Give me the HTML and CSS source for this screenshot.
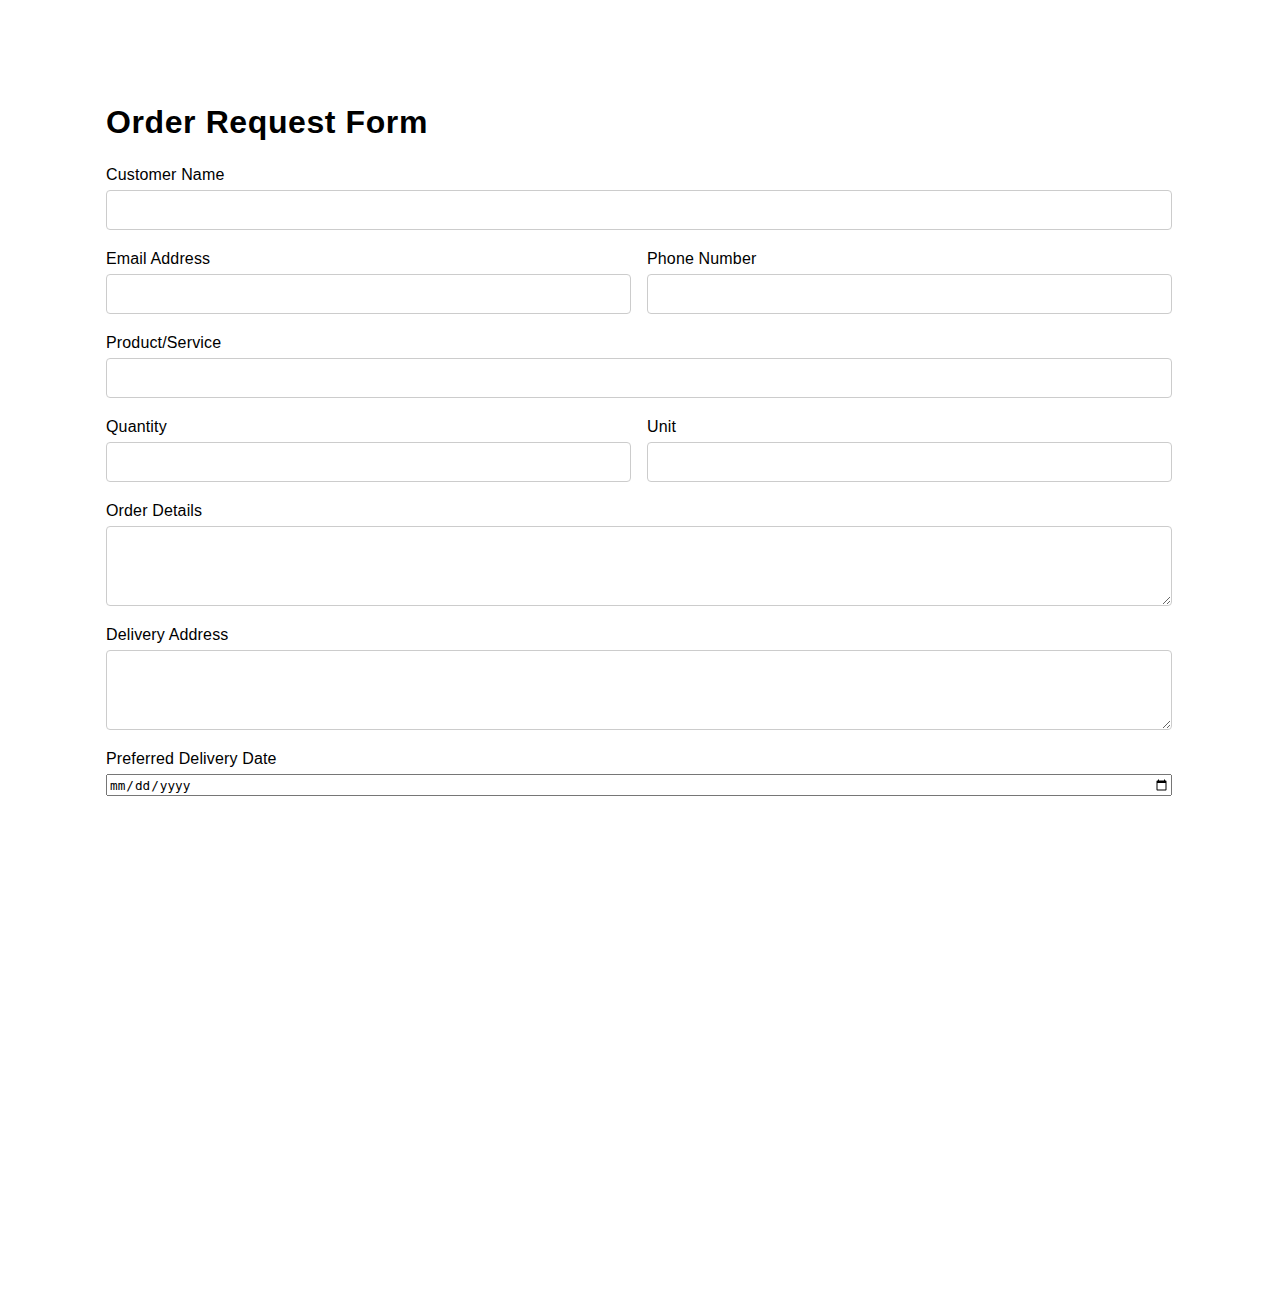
FILE: index.html
```html
<!DOCTYPE html>
<html lang="en">
<head>
    <meta charset="UTF-8">
    <meta name="viewport" content="width=device-width, initial-scale=1.0">
    <title>Order Request Form</title>
    <link rel="stylesheet" href="styles.css">
</head>
<body>
    <div class="container">
        <h1>Order Request Form</h1>
        <form>
            <div class="field">
                <label for="name">Customer Name</label>
                <input type="text" id="name" class="box">
            </div>

            <div class="row">
                <div class="field">
                    <label for="email">Email Address</label>
                    <input type="email" id="email" class="box">
                </div>
                <div class="field">
                    <label for="phone">Phone Number</label>
                    <input type="tel" id="phone" class="box">
                </div>
            </div>

            <div class="field">
                <label for="product">Product/Service</label>
                <input type="text" id="product" class="box">
            </div>

            <div class="row">
                <div class="field">
                    <label for="qty">Quantity</label>
                    <input type="number" id="qty" class="box">
                </div>
                <div class="field">
                    <label for="unit">Unit</label>
                    <input type="text" id="unit" class="box">
                </div>
            </div>

            <div class="field">
                <label for="details">Order Details</label>
                <textarea id="details" class="box area"></textarea>
            </div>

            <div class="field">
                <label for="address">Delivery Address</label>
                <textarea id="address" class="box area"></textarea>
            </div>

            <div class="field">
                <label for="date">Preferred Delivery Date</label>
                <input type="date" id="date" class="date">
            </div>
        </form>
    </div>
</body>
</html>
```

FILE: styles.css
```css
body {
    margin: 0;
    font-family: "Liberation Sans", Arial, sans-serif;
    color: #000;
    background: #fff;
}
.container { width: 1066px; margin: 0 auto; padding: 104px 0 40px; }
h1 { font-size: 32px; margin: 0 0 25px; line-height: 37px; letter-spacing: 0.6px; }
.field { margin-bottom: 20px; }
.field label { display: block; font-size: 16px; line-height: 18px; margin-bottom: 6px; letter-spacing: 0.15px; }
.row { display: grid; grid-template-columns: 1fr 1fr; gap: 16px; }
.box {
    display: block;
    width: 100%;
    height: 40px;
    box-sizing: border-box;
    border: 1px solid #ccc;
    border-radius: 4px;
    padding: 8px;
    font-family: inherit;
    font-size: 16px;
}
.area { height: 80px; resize: vertical; }
.date {
    display: block;
    width: 100%;
    height: 22px;
    box-sizing: border-box;
    margin: 0;
    font: 12.7px "DejaVu Sans Mono", monospace;
}
```
